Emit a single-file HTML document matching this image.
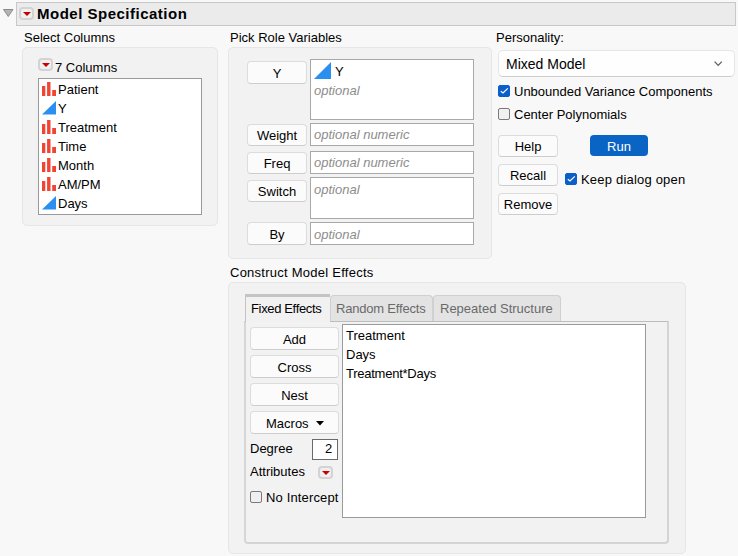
<!DOCTYPE html>
<html><head><meta charset="utf-8">
<style>
*{box-sizing:border-box;margin:0;padding:0}
html,body{width:738px;height:556px;overflow:hidden;background:#f8f8f8;font-family:"Liberation Sans",sans-serif;font-size:13px;color:#000}
.a{position:absolute}
.t{position:absolute;white-space:nowrap;line-height:16px}
.hdr{left:16px;top:2px;width:720px;height:24px;background:#ebebeb;border:1px solid #c8c8c8}
.panel{position:absolute;background:#f2f2f2;border:1px solid #e6e6e6;border-radius:5px}
.rbtn{position:absolute;width:15px;height:13px;border:2px solid #d3d3d3;border-radius:4px;background:#f0f0f0}
.rbtn:after{content:"";position:absolute;left:1.5px;top:2.6px;border-left:4.25px solid transparent;border-right:4.25px solid transparent;border-top:4.6px solid #c80000}
.list{position:absolute;background:#fff;border:1px solid #9a9a9a}
.btn{position:absolute;background:#fbfbfb;border:1px solid #dcdcdc;border-bottom-color:#cdcdcd;border-radius:4px;text-align:center;line-height:20px;padding-top:1px;white-space:nowrap}
.fld{position:absolute;background:#fff;border:1px solid #a8a8a8}
.ph{position:absolute;color:#8c8c8c;font-style:italic;white-space:nowrap;line-height:16px}
.cb{position:absolute;width:12px;height:12px;border:1px solid #7a7a7a;border-radius:2px;background:#f0f0f0}
.cbon{background:#0a5fc8;border-color:#0a5fc8}
.bars{position:absolute;width:15px;height:14px}
.tri{position:absolute}
</style></head><body>

<!-- header -->
<svg class="a" style="left:3px;top:9px" width="11" height="8"><path d="M0.5 0.5 H10 L5.25 7.5 Z" fill="#b4b4b4" stroke="#8c8c8c" stroke-width="1"/></svg>
<div class="a hdr"></div>
<div class="rbtn" style="left:19px;top:7px;width:15px;height:13px"></div>
<div class="t" style="left:37px;top:5px;font-weight:bold;font-size:15px;letter-spacing:0.5px;line-height:18px">Model Specification</div>

<!-- Select Columns -->
<div class="t" style="left:24px;top:30px">Select Columns</div>
<div class="panel" style="left:22px;top:47px;width:196px;height:179px"></div>
<div class="rbtn" style="left:38px;top:58px"></div>
<div class="t" style="left:55px;top:60px">7 Columns</div>
<div class="list" style="left:38px;top:78px;width:164px;height:137px"></div>
<svg class="a" style="left:42px;top:82px" width="15" height="128">
 <g fill="#f04434">
  <path d="M0 4h3.3v10h-3.3zM5.1 0h3.4v14h-3.4zM10.2 8h3.8v6h-3.8z"/>
  <path transform="translate(0,38)" d="M0 4h3.3v10h-3.3zM5.1 0h3.4v14h-3.4zM10.2 8h3.8v6h-3.8z"/>
  <path transform="translate(0,57)" d="M0 4h3.3v10h-3.3zM5.1 0h3.4v14h-3.4zM10.2 8h3.8v6h-3.8z"/>
  <path transform="translate(0,76)" d="M0 4h3.3v10h-3.3zM5.1 0h3.4v14h-3.4zM10.2 8h3.8v6h-3.8z"/>
  <path transform="translate(0,95)" d="M0 4h3.3v10h-3.3zM5.1 0h3.4v14h-3.4zM10.2 8h3.8v6h-3.8z"/>
 </g>
 <g fill="#2a8ff0">
  <path d="M0 32.5 L14 19 V32.5 Z"/>
  <path transform="translate(0,95)" d="M0 32.5 L14 19 V32.5 Z"/>
 </g>
</svg>
<div class="t" style="left:58px;top:82px">Patient</div>
<div class="t" style="left:58px;top:101px">Y</div>
<div class="t" style="left:58px;top:120px">Treatment</div>
<div class="t" style="left:58px;top:139px">Time</div>
<div class="t" style="left:58px;top:158px">Month</div>
<div class="t" style="left:58px;top:177px">AM/PM</div>
<div class="t" style="left:58px;top:196px">Days</div>

<!-- Pick Role Variables -->
<div class="t" style="left:230px;top:30px">Pick Role Variables</div>
<div class="panel" style="left:228px;top:47px;width:264px;height:212px"></div>
<div class="btn" style="left:247px;top:61px;width:60px;height:23px;padding-top:2px">Y</div>
<div class="btn" style="left:247px;top:124px;width:60px;height:22px">Weight</div>
<div class="btn" style="left:247px;top:152px;width:60px;height:22px">Freq</div>
<div class="btn" style="left:247px;top:180px;width:60px;height:22px">Switch</div>
<div class="btn" style="left:247px;top:222px;width:60px;height:23px;padding-top:2px">By</div>
<div class="fld" style="left:310px;top:59px;width:164px;height:61px"></div>
<svg class="a" style="left:314px;top:62px" width="17" height="17"><path d="M0 17 L17 0 V17 Z" fill="#2a8ff0"/></svg>
<div class="t" style="left:335px;top:64px">Y</div>
<div class="ph" style="left:314px;top:83px">optional</div>
<div class="fld" style="left:310px;top:123px;width:164px;height:23px"></div>
<div class="ph" style="left:314px;top:127px">optional numeric</div>
<div class="fld" style="left:310px;top:151px;width:164px;height:23px"></div>
<div class="ph" style="left:314px;top:155px">optional numeric</div>
<div class="fld" style="left:310px;top:177px;width:164px;height:42px"></div>
<div class="ph" style="left:314px;top:182px">optional</div>
<div class="fld" style="left:310px;top:222px;width:164px;height:23px"></div>
<div class="ph" style="left:314px;top:227px">optional</div>

<!-- Personality -->
<div class="t" style="left:496px;top:30px">Personality:</div>
<div class="a" style="left:498px;top:50px;width:237px;height:27px;background:#fefefe;border:1px solid #e6e6e6;border-bottom-color:#cdcdcd;border-radius:5px"></div>
<div class="t" style="left:506px;top:56px;font-size:14px">Mixed Model</div>
<svg class="a" style="left:714px;top:61px" width="9" height="6"><path d="M0.6 0.6 L4.2 4.4 L7.8 0.6" fill="none" stroke="#606060" stroke-width="1.3"/></svg>
<div class="cb cbon" style="left:498px;top:85px"><svg class="a" style="left:0;top:0" width="11" height="11"><path d="M1.8 5.2 L4 6.9 L8.8 2.4" fill="none" stroke="#fff" stroke-width="1.25"/></svg></div>
<div class="t" style="left:514px;top:84px">Unbounded Variance Components</div>
<div class="cb" style="left:498px;top:108px"></div>
<div class="t" style="left:514px;top:107px">Center Polynomials</div>
<div class="btn" style="left:498px;top:135px;width:60px;height:22px">Help</div>
<div class="a" style="left:590px;top:135px;width:58px;height:21px;background:#0a64c4;border-radius:4px;color:#fff;text-align:center;line-height:20px;padding-top:2px">Run</div>
<div class="btn" style="left:498px;top:164px;width:60px;height:22px">Recall</div>
<div class="cb cbon" style="left:565px;top:173px"><svg class="a" style="left:0;top:0" width="11" height="11"><path d="M1.8 5.2 L4 6.9 L8.8 2.4" fill="none" stroke="#fff" stroke-width="1.25"/></svg></div>
<div class="t" style="left:581px;top:172px;letter-spacing:0.2px">Keep dialog open</div>
<div class="btn" style="left:498px;top:193px;width:60px;height:22px">Remove</div>

<!-- Construct Model Effects -->
<div class="t" style="left:230px;top:265px;letter-spacing:0.25px">Construct Model Effects</div>
<div class="panel" style="left:228px;top:282px;width:458px;height:272px"></div>
<!-- tabs -->
<div class="a" style="left:433px;top:295px;width:128px;height:27px;background:#e3e3e3;border:1px solid #d0d0d0;border-bottom:none;border-radius:4px 4px 0 0"></div>
<div class="t" style="left:440px;top:301px;color:#6a6a6a">Repeated Structure</div>
<div class="a" style="left:330px;top:295px;width:103px;height:27px;background:#e3e3e3;border:1px solid #d0d0d0;border-bottom:none;border-radius:4px 4px 0 0"></div>
<div class="t" style="left:336px;top:301px;color:#6a6a6a;letter-spacing:-0.2px">Random Effects</div>
<div class="a" style="left:244px;top:321px;width:425px;height:223px;border-top:1px solid #bdbdbd;border-left:2px solid #d6d6d6;border-right:2px solid #d4d4d4;border-bottom:2px solid #d4d4d4;border-radius:0 0 4px 4px"></div>
<div class="a" style="left:245px;top:294px;width:85px;height:28px;background:#f1f1f1;border-top:3px solid #c4c4c4;border-left:1px solid #c4c4c4"></div>
<div class="t" style="left:251px;top:301px;letter-spacing:-0.35px">Fixed Effects</div>

<div class="btn" style="left:250px;top:327px;width:89px;height:23px;padding-top:2px">Add</div>
<div class="btn" style="left:250px;top:355px;width:89px;height:23px;padding-top:2px">Cross</div>
<div class="btn" style="left:250px;top:383px;width:89px;height:23px;padding-top:2px">Nest</div>
<div class="btn" style="left:250px;top:411px;width:89px;height:23px;text-align:left;padding-left:15px;padding-top:2px">Macros</div>
<svg class="a" style="left:316px;top:421px" width="8" height="5"><path d="M0 0 H8 L4 4.5 Z" fill="#000"/></svg>
<div class="t" style="left:250px;top:441px">Degree</div>
<div class="a" style="left:312px;top:439px;width:26px;height:21px;background:#fff;border:1px solid #6a6a6a"></div>
<div class="t" style="left:325px;top:441px">2</div>
<div class="t" style="left:250px;top:464px">Attributes</div>
<div class="rbtn" style="left:318px;top:466px;width:15px;height:13px"></div>
<div class="cb" style="left:250px;top:491px"></div>
<div class="t" style="left:266px;top:490px;letter-spacing:0.15px">No Intercept</div>

<div class="list" style="left:342px;top:324px;width:304px;height:194px"></div>
<div class="t" style="left:346px;top:328px">Treatment</div>
<div class="t" style="left:346px;top:347px">Days</div>
<div class="t" style="left:346px;top:366px;letter-spacing:-0.25px">Treatment*Days</div>

</body></html>
